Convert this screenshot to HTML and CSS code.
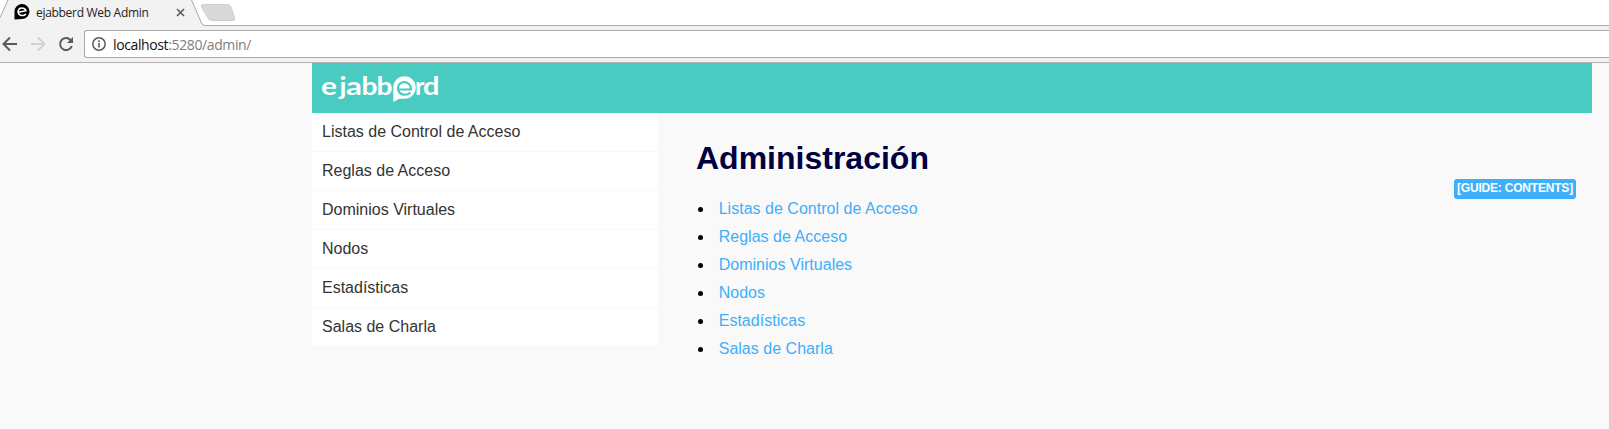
FILE: index.html
```html
<!DOCTYPE html>
<html lang="es">
<head>
<meta charset="utf-8">
<title>ejabberd Web Admin</title>
<link rel="stylesheet" href="styles.css">
</head>
<body>
<div class="tabstrip">
  <svg class="tabshape" width="240" height="26" viewBox="0 0 240 26">
    <path d="M0 17.5 8 0H191.500L201.500 23Q202.500 25.500 205 25.500V26H0Z" fill="#f2f2f2"/>
    <path d="M0 17.500 8 0M191.500 0 201.500 23Q202.500 25.500 205 25.500H240" fill="none" stroke="#a9a9a9"/>
    <path d="M203 4.500H227Q230 4.500 231 7L234.500 18Q235.500 20.500 233 20.500H212Q209 20.500 208 18L201.500 7Q200.500 4.500 203 4.500Z" fill="#d9d9d9" stroke="#cecece"/>
  </svg>
  <div class="tab">
    <svg class="favicon" width="16" height="16" viewBox="0 0 16 16">
      <path d="M.5 15.500V8A7.500 7.500 0 1 1 8 15Z" fill="#000"/>
      <path d="M3.500 8.500 12 6.800C10.500 3 5.200 3 4.200 6.800C3.500 11.500 9 13 12 10" fill="none" stroke="#fff" stroke-width="1.500"/>
    </svg>
    <span class="tabtitle">ejabberd Web Admin</span>
    <svg class="close" width="9" height="9" viewBox="0 0 9 9"><path d="M1 1 8 8M8 1 1 8" stroke="#5a5a5a" stroke-width="1.600"/></svg>
  </div>
</div>
<div class="toolbar">
  <svg class="navicons" width="80" height="36" viewBox="0 0 80 36">
    <path d="M17 18H4M10 11.500 3.500 18 10 24.500" fill="none" stroke="#5a5a5a" stroke-width="2"/>
    <path d="M31 18H44M38 11.500 44.500 18 38 24.500" fill="none" stroke="#d2d2d2" stroke-width="2"/>
    <path d="M70.500 14A6 6 0 1 0 71.800 20" fill="none" stroke="#5a5a5a" stroke-width="2"/>
    <path d="M73 11V17H67Z" fill="#5a5a5a"/>
  </svg>
  <div class="omnibox">
    <svg width="14" height="14" viewBox="0 0 14 14"><circle cx="7" cy="7" r="6.200" fill="none" stroke="#5a5a5a" stroke-width="1.500"/><path d="M7 6V10.500M7 3.300V5" stroke="#5a5a5a" stroke-width="1.600"/></svg>
    <span class="url">localhost<span class="path">:5280/admin/</span></span>
  </div>
</div>
<div class="container">
  <header class="header">
    <svg class="logo" width="140" height="50" viewBox="0 0 140 50" role="img" aria-label="ejabberd">
      <path d="M81.300 39V24.500A11.200 11.200 0 1 1 92.500 35.700H87Z" fill="#fff"/>
      <g class="word">
        <text x="9" y="32" textLength="16" lengthAdjust="spacingAndGlyphs">e</text>
        <text x="27.500" y="32" textLength="7" lengthAdjust="spacingAndGlyphs">j</text>
        <text x="34" y="32" textLength="16" lengthAdjust="spacingAndGlyphs">a</text>
        <text x="49.500" y="32" textLength="16" lengthAdjust="spacingAndGlyphs">b</text>
        <text x="64.500" y="32" textLength="16" lengthAdjust="spacingAndGlyphs">b</text>
        <text x="103" y="32" textLength="9.500" lengthAdjust="spacingAndGlyphs">r</text>
        <text x="111" y="32" textLength="16.500" lengthAdjust="spacingAndGlyphs">d</text>
      </g>
      <path d="M86 26.500H99C99 17 86 17 86 25C86 32 94 33.500 98.500 29.500" fill="none" stroke="#4acbc1" stroke-width="2.200"/>
    </svg>
  </header>
  <div class="columns">
    <ul class="menu">
      <li>Listas de Control de Acceso</li>
      <li>Reglas de Acceso</li>
      <li>Dominios Virtuales</li>
      <li>Nodos</li>
      <li>Estadísticas</li>
      <li>Salas de Charla</li>
    </ul>
    <main class="content">
      <h1>Administración</h1>
      <div class="guide-row"><span class="guide">[GUIDE: CONTENTS]</span></div>
      <ul class="links">
        <li><a>Listas de Control de Acceso</a></li>
        <li><a>Reglas de Acceso</a></li>
        <li><a>Dominios Virtuales</a></li>
        <li><a>Nodos</a></li>
        <li><a>Estadísticas</a></li>
        <li><a>Salas de Charla</a></li>
      </ul>
    </main>
  </div>
</div>
</body>
</html>
```
FILE: styles.css
```css
* { box-sizing: border-box; }
body {
  margin: 0;
  height: 429px;
  overflow: hidden;
  background: #f9f9f9;
  font: 16px "Liberation Sans", Arial, sans-serif;
}
svg { display: block; flex: none; }
ul { margin: 0; padding: 0; list-style: none; }
.tabstrip {
  position: relative;
  height: 26px;
  background: #fff;
  border-bottom: 1px solid #a9a9a9;
}
.tabshape { position: absolute; left: 0; top: 0; }
.tab {
  position: relative;
  display: flex;
  align-items: center;
  width: 186px;
  height: 24px;
  padding-left: 14px;
}
.tabtitle {
  margin-left: 6px;
  width: 140px;
  font: 12px "Open Sans", "Noto Sans", sans-serif;
  letter-spacing: -0.3px;
  white-space: nowrap;
  color: #222;
}
.toolbar {
  display: flex;
  height: 37px;
  padding-top: 4px;
  background: #f2f2f2;
  border-bottom: 1px solid #b2b2b2;
}
.navicons { margin-top: -4px; }
.omnibox {
  display: flex;
  align-items: center;
  flex: 1;
  height: 28px;
  margin-left: 4px;
  padding-left: 7px;
  background: #fff;
  border: 1px solid #a9a9a9;
  border-right: 0;
  border-radius: 3px 0 0 3px;
}
.url {
  margin-left: 7px;
  font: 14px "Open Sans", "Noto Sans", sans-serif;
  letter-spacing: -0.38px;
  white-space: nowrap;
  color: #111;
}
.path { color: #808080; }
.container { width: 1280px; margin-left: 312px; }
.header { height: 50px; background: #4acbc1; }
.word { font: bold 25px Lato, sans-serif; fill: #fff; }
.columns { display: flex; }
.menu { width: 346px; }
.menu li {
  height: 39px;
  line-height: 38px;
  padding-left: 10px;
  background: #fff;
  border-bottom: 1px solid #f9f9f9;
  color: #333;
}
.content { flex: 1; padding: 26px 16px 0 38px; }
h1 {
  margin: 0;
  font-size: 32px;
  line-height: 38px;
  color: #000040;
}
.guide-row { display: flex; justify-content: flex-end; height: 18px; padding-top: 2px; }
.guide {
  flex: none;
  width: 122px;
  height: 20px;
  border-radius: 3px;
  background: #3eaffa;
  color: #fff;
  font-size: 12px;
  letter-spacing: -0.2px;
  font-weight: bold;
  line-height: 19px;
  text-align: center;
  white-space: nowrap;
}
.links { padding-left: 18px; list-style: disc; }
.links li { padding-left: 4.700px; line-height: 28px; color: #000; }
.links a { color: #3eaffa; letter-spacing: 0.02px; }
```
